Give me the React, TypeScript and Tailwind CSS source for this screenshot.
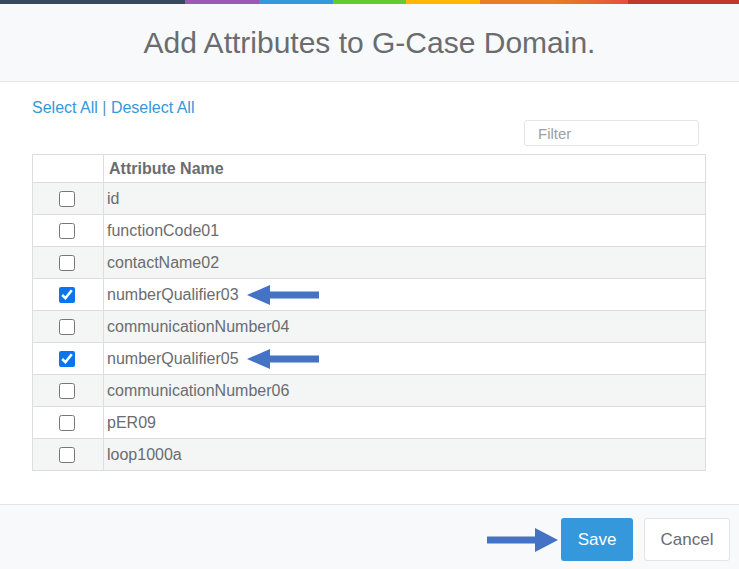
import { useState } from "react";

interface Attributo {
  nome: string;
  marcado: boolean;
  seta?: boolean;
}

const ATRIBUTOS: Attributo[] = [
  { nome: "id", marcado: false },
  { nome: "functionCode01", marcado: false },
  { nome: "contactName02", marcado: false },
  { nome: "numberQualifier03", marcado: true, seta: true },
  { nome: "communicationNumber04", marcado: false },
  { nome: "numberQualifier05", marcado: true, seta: true },
  { nome: "communicationNumber06", marcado: false },
  { nome: "pER09", marcado: false },
  { nome: "loop1000a", marcado: false },
];

// Seta azul de anotação (aponta para a esquerda por padrão).
function Seta({ largura, altura, haste, direita = false }: { largura: number; altura: number; haste: number; direita?: boolean }) {
  const cab = 23;
  const meio = altura / 2;
  const d = `M0 ${meio} L${cab} 0 L${cab} ${meio - haste / 2} L${largura} ${meio - haste / 2} L${largura} ${meio + haste / 2} L${cab} ${meio + haste / 2} L${cab} ${altura} Z`;
  return (
    <svg
      width={largura}
      height={altura}
      viewBox={`0 0 ${largura} ${altura}`}
      className={`block shrink-0 ${direita ? "rotate-180" : ""}`}
    >
      <path d={d} fill="#4472c4" />
    </svg>
  );
}

export default function App() {
  const [itens, setItens] = useState(ATRIBUTOS);
  const [filtro, setFiltro] = useState("");

  const alternar = (i: number) =>
    setItens((l) => l.map((a, j) => (j === i ? { ...a, marcado: !a.marcado } : a)));

  const visiveis = itens.filter((a) => a.nome.toLowerCase().includes(filtro.toLowerCase()));

  return (
    <div className="min-h-screen w-full bg-white font-['Liberation_Sans',Arial,sans-serif] text-[#6a6c6f]">
      {/* Linha colorida */}
      <div className="flex h-1 w-full">
        <div className="basis-[25%] bg-[#34495e]" />
        <div className="basis-[10%] bg-[#9b59b6]" />
        <div className="basis-[10%] bg-[#3498db]" />
        <div className="basis-[10%] bg-[#62cb31]" />
        <div className="basis-[10%] bg-[#ffb606]" />
        <div className="basis-[10%] bg-[#e67e22]" />
        <div className="basis-[10%] bg-linear-to-r from-[#e67e22] to-[#e74c3c]" />
        <div className="basis-[15%] bg-[#c0392b]" />
      </div>

      {/* Cabeçalho */}
      <div className="flex h-[78px] items-center justify-center border-b border-[#e4e5e7] bg-[#f7f9fa]">
        <h4 className="text-[30px] font-normal leading-none text-[#6a6c6f]">Add Attributes to G-Case Domain.</h4>
      </div>

      {/* Corpo */}
      <div className="pl-[32px] pr-[33px] pt-[17px]">
        <div className="text-[16px] leading-[18px] text-[#3498db]">
          <a className="cursor-pointer hover:underline" onClick={() => setItens((l) => l.map((a) => ({ ...a, marcado: true })))}>
            Select All
          </a>{" "}
          <span className="text-[#5b8fc4]">|</span>{" "}
          <a className="cursor-pointer hover:underline" onClick={() => setItens((l) => l.map((a) => ({ ...a, marcado: false })))}>
            Deselect All
          </a>
        </div>

        <div className="mt-[3px] flex justify-end pr-[7px]">
          <input
            value={filtro}
            onChange={(e) => setFiltro(e.target.value)}
            placeholder="Filter"
            className="h-[26px] w-[175px] rounded-[3px] border border-[#e4e5e7] px-[13px] text-[15px] text-[#6a6c6f] outline-none placeholder:text-[#a0a0a0]"
          />
        </div>

        <table className="mt-[8px] w-full border-collapse text-[16px]">
          <thead>
            <tr className="h-[28px] bg-white">
              <th className="w-[71px] border border-[#dddddd]" />
              <th className="border border-[#dddddd] pl-[5px] text-left font-bold">Attribute Name</th>
            </tr>
          </thead>
          <tbody>
            {visiveis.map((a, i) => (
              <tr key={a.nome} className={`h-[32px] ${i % 2 === 0 ? "bg-[#f3f6f4]" : "bg-white"}`}>
                <td className="border border-[#dddddd] pr-[2px] text-center">
                  <input
                    type="checkbox"
                    checked={a.marcado}
                    onChange={() => alternar(itens.indexOf(a))}
                    className="m-0 h-4 w-4 align-middle accent-[#0b75f0]"
                  />
                </td>
                <td className="border border-[#dddddd] pl-[3px]">
                  <div className="flex items-center">
                    <span>{a.nome}</span>
                    {a.seta && (
                      <span className="ml-[8px]">
                        <Seta largura={72} altura={20} haste={7} />
                      </span>
                    )}
                  </div>
                </td>
              </tr>
            ))}
          </tbody>
        </table>
      </div>

      {/* Rodapé */}
      <div className="mt-[33px] flex h-[65px] items-start justify-end border-t border-[#e4e5e7] bg-[#f7f9fa] pr-[9px] pt-[13px]">
        <div className="flex items-center">
          <Seta largura={71} altura={24} haste={7} direita />
          <button className="ml-[3px] h-[43px] w-[72px] rounded-[3px] bg-[#3498db] text-[17px] text-white">Save</button>
          <button className="ml-[11px] h-[43px] w-[86px] rounded-[3px] border border-[#e4e5e7] bg-white text-[17px] text-[#6a6c6f]">
            Cancel
          </button>
        </div>
      </div>
    </div>
  );
}
